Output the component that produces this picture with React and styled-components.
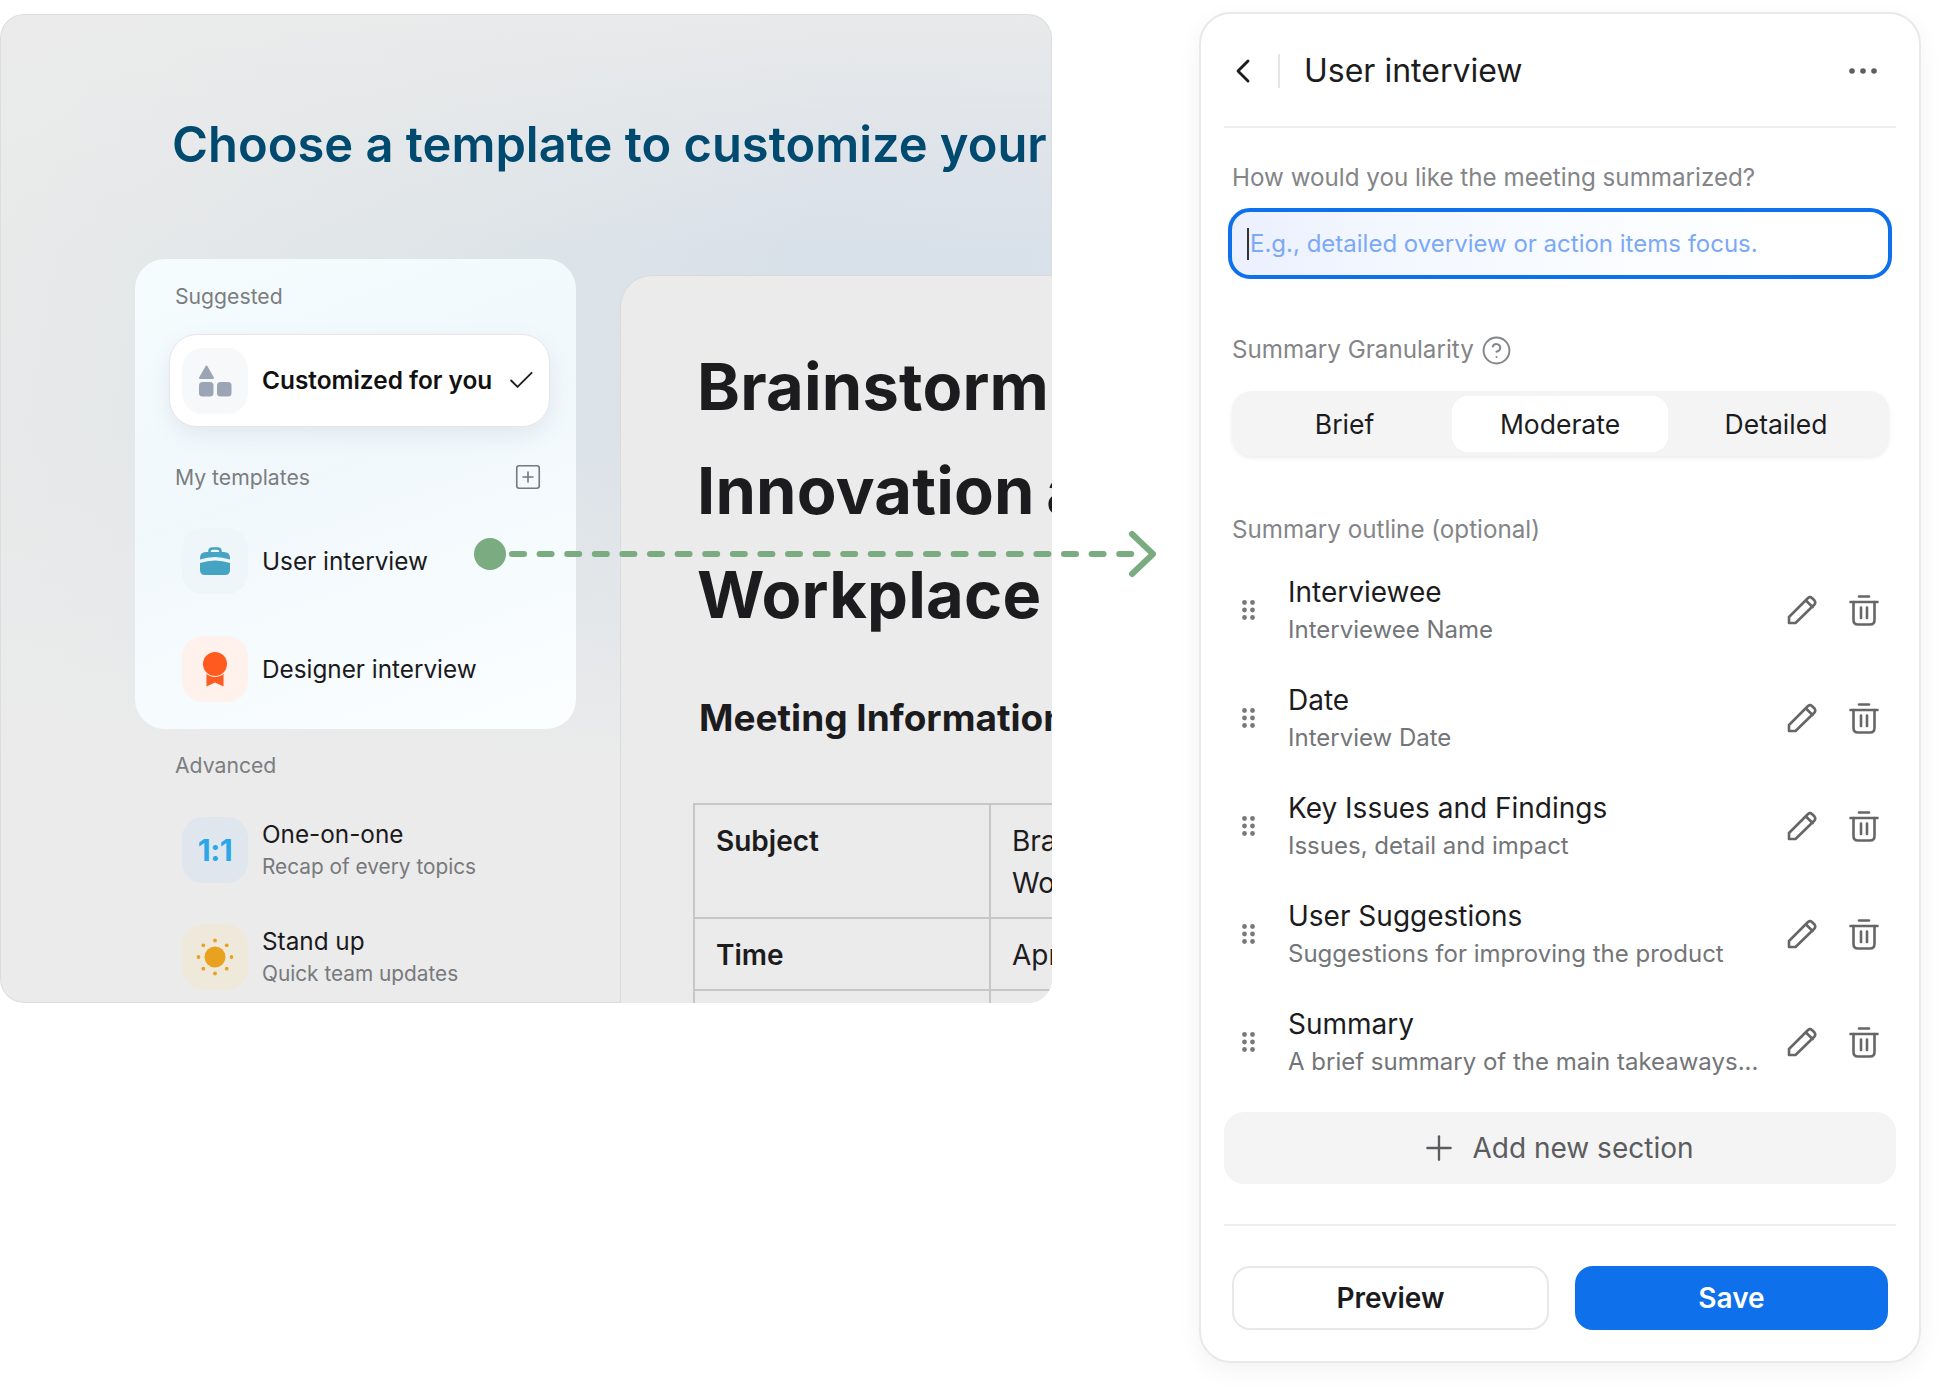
import styled, { createGlobalStyle } from "styled-components";
import { Check, ChevronLeft, CircleHelp, Plus, SquarePlus } from "lucide-react";

const GlobalStyle = createGlobalStyle`
  * { box-sizing: border-box; }
  html, body { margin: 0; background: #fff; }
  body { font-family: Inter, "Liberation Sans", sans-serif; color: #1c1c1e; }
`;

const Page = styled.div`
  position: relative;
  display: flex;
  align-items: flex-start;
  width: 1942px;
  height: 1392px;
  overflow: hidden;
`;

const Preview = styled.section`
  flex: none;
  width: 1052px;
  height: 989px;
  margin-top: 14px;
  border-radius: 24px;
  overflow: hidden;
  box-shadow: inset 0 0 0 1px #dcdddd;
  background:
    linear-gradient(180deg, rgba(235, 235, 235, 0.85) 0%, rgba(235, 235, 235, 0) 24%, rgba(235, 235, 235, 0) 42%, #ebebeb 76%),
    linear-gradient(100deg, #e9eaea 0%, #dfe5e8 38%, #d8e0e9 70%, #d9e1ea 100%);
`;

const Heading = styled.h1`
  margin: 0;
  padding: 102px 0 0 172px;
  height: 245px;
  font-size: 48.85px;
  line-height: 58px;
  font-weight: 600;
  color: #004a70;
  white-space: nowrap;
`;

const PreviewBody = styled.div`
  display: flex;
  align-items: flex-start;
`;

const Sidebar = styled.div`
  flex: none;
  width: 441px;
  margin-left: 135px;
`;

const SuggestedCard = styled.div`
  padding: 25px 0 27px;
  border-radius: 30px;
  background: linear-gradient(160deg, #f4fcfe 0%, #f1f8fc 45%, #fbfeff 100%);
`;

const SectionLabel = styled.div`
  display: flex;
  align-items: center;
  justify-content: space-between;
  height: 26px;
  margin: ${({ $top }) => $top || 0}px 0 ${({ $bottom }) => $bottom || 0}px;
  padding: 0 33px 2px 40px;
  font-size: 21.2px;
  line-height: 24px;
  color: #7b7d80;
`;

const SelectedItem = styled.div`
  display: flex;
  align-items: center;
  gap: 14px;
  width: 381px;
  height: 93px;
  margin-left: 34px;
  padding: 0 12px;
  border: 1px solid #e6e6e8;
  border-radius: 28px;
  background: #fff;
  box-shadow: 0 8px 20px rgba(120, 140, 160, 0.14);
`;

const SelectedName = styled.div`
  flex: 1;
  padding-bottom: 2px;
  font-size: 24.4px;
  font-weight: 600;
  color: #111;
  white-space: nowrap;
`;

const TemplateRow = styled.div`
  display: flex;
  align-items: center;
  gap: 14px;
  height: 66px;
  margin: ${({ $top }) => $top || 0}px 0 0 47px;
`;

const IconBox = styled.div`
  flex: none;
  display: flex;
  align-items: center;
  justify-content: center;
  width: 66px;
  height: 66px;
  border-radius: 21px;
  background: ${({ $bg }) => $bg};
`;

const OneOnOne = styled.span`
  font-size: 30px;
  font-weight: 700;
  color: #2aa7e8;
  letter-spacing: -0.5px;
`;

const TemplateName = styled.div`
  font-size: 24.3px;
  line-height: 33px;
  color: #1a1a1c;
  white-space: nowrap;
`;

const TemplateHint = styled.div`
  font-size: 20.8px;
  line-height: 32px;
  color: #77797c;
  white-space: nowrap;
`;

const DocCard = styled.article`
  flex: none;
  width: 760px;
  height: 800px;
  margin: 16px 0 0 44px;
  padding: 59px 0 0 72px;
  border: 1px solid #dadada;
  border-radius: 32px;
  background: #ebebeb;
`;

const DocTitle = styled.h2`
  margin: 0 0 0 4px;
  font-size: 65px;
  line-height: 104px;
  font-weight: 700;
  letter-spacing: 0.2px;
  word-spacing: -4px;
  color: #1c1c1e;
  white-space: nowrap;
`;

const DocSubtitle = styled.h3`
  margin: 43px 0 0 6px;
  font-size: 37px;
  line-height: 56px;
  font-weight: 700;
  color: #1c1c1e;
  white-space: nowrap;
`;

const DocTable = styled.table`
  margin-top: 57px;
  width: 660px;
  table-layout: fixed;
  border-collapse: collapse;
  font-size: 28px;
  line-height: 42px;
  color: #1c1c1e;

  td {
    padding: 15px 20px 13px 21px;
    border: 2px solid #c6c6c6;
    vertical-align: top;
  }
  td:first-child { width: 296px; font-weight: 600; }
`;

const DocCell = styled.div`
  white-space: nowrap;
`;

const FlowArrow = styled.svg`
  position: absolute;
  left: 474px;
  top: 530px;
`;

const Panel = styled.section`
  flex: none;
  display: flex;
  flex-direction: column;
  width: 722px;
  height: 1351px;
  margin: 12px 0 0 147px;
  padding: 0 23px;
  border: 2px solid #e9e9e9;
  border-radius: 32px;
  background: #fff;
  box-shadow: 0 8px 24px rgba(0, 0, 0, 0.05);
`;

const PanelHeader = styled.header`
  flex: none;
  display: flex;
  align-items: center;
  height: 114px;
  padding: 2px 19px 0 9px;
  border-bottom: 2px solid #f0f0f0;
`;

const BackButton = styled.div`
  display: flex;
  width: 47px;
  height: 34px;
  align-items: center;
  border-right: 2px solid #e6e6e6;
  color: #1c1c1e;
`;

const BackIcon = styled(ChevronLeft)`
  flex: none;
  margin-left: -10px;
`;

const PanelTitle = styled.h2`
  flex: 1;
  margin: 0 0 0 24px;
  font-size: 32px;
  line-height: 40px;
  font-weight: 400;
  color: #1c1c1e;
`;

const FieldLabel = styled.div`
  display: flex;
  align-items: center;
  gap: 7px;
  height: 30px;
  margin: ${({ $top }) => $top}px 0 ${({ $bottom }) => $bottom}px;
  padding-left: 8px;
  font-size: 24.2px;
  line-height: 30px;
  color: #838588;
`;

const PromptInput = styled.div`
  position: relative;
  display: flex;
  align-items: center;
  height: 71px;
  margin: 0 4px;
  padding-left: 18px;
  border: 4px solid #0e70eb;
  border-radius: 22px;
  font-size: 24px;
  color: #7ba9f7;
  background: linear-gradient(90deg, #eceffe 0%, #f3f8ff 25%, #fff 85%);

  &::before {
    content: "";
    position: absolute;
    left: 15px;
    top: 16px;
    width: 2px;
    height: 32px;
    background: #333;
  }
`;

const Segments = styled.div`
  display: grid;
  grid-template-columns: 215px 216px 1fr;
  height: 65px;
  margin: 0 7px 0 8px;
  padding: 5px 5px 4px;
  border-radius: 20px;
  background: #f4f4f4;
  box-shadow: 0 2px 4px rgba(0, 0, 0, 0.08);
`;

const Segment = styled.div`
  display: flex;
  align-items: center;
  justify-content: center;
  border-radius: 16px;
  font-size: 26.5px;
  color: #1c1c1e;
  background: ${({ $active }) => ($active ? "#fff" : "transparent")};
`;

const OutlineRow = styled.div`
  flex: none;
  display: flex;
  align-items: center;
  height: 108px;
  padding: 0 17px 0 18px;
`;

const RowText = styled.div`
  flex: 1;
  margin-left: 33px;
  padding-top: 2px;
  min-width: 0;
`;

const RowTitle = styled.div`
  font-size: 28px;
  line-height: 36px;
  color: #1c1c1e;
`;

const RowHint = styled.div`
  margin-top: 1px;
  font-size: 24px;
  line-height: 37px;
  color: #737578;
  white-space: nowrap;
`;

const RowActions = styled.div`
  display: flex;
  align-items: center;
  gap: 32px;
`;

const AddButton = styled.div`
  flex: none;
  display: flex;
  align-items: center;
  justify-content: center;
  gap: 20px;
  height: 72px;
  margin-top: 16px;
  border-radius: 20px;
  font-size: 28px;
  color: #5a5c5f;
  background: #f4f4f4;
`;

const AddIcon = styled(Plus)`
  flex: none;
  margin: 0 -7px;
`;

const FooterRule = styled.div`
  flex: none;
  height: 2px;
  margin-top: 40px;
  background: #f0f0f0;
`;

const FooterActions = styled.div`
  flex: none;
  display: flex;
  gap: 26px;
  margin-top: 40px;
  padding: 0 8px;
`;

const ActionButton = styled.div`
  flex: 1;
  display: flex;
  align-items: center;
  justify-content: center;
  height: 64px;
  border: ${({ $primary }) => ($primary ? "none" : "2px solid #e8e8e8")};
  border-radius: 18px;
  font-size: 28px;
  font-weight: 600;
  color: ${({ $primary }) => ($primary ? "#fff" : "#1c1c1e")};
  background: ${({ $primary }) => ($primary ? "#0e70eb" : "#fff")};
`;

const ShapesIcon = () => (
  <svg width="34" height="32" viewBox="0 0 34 32">
    <path d="M8.5 1.5 L15 13 H2 Z" fill="#9ca5b5" stroke="#9ca5b5" strokeWidth="2" strokeLinejoin="round" />
    <rect x="1" y="17" width="14.5" height="14.5" rx="3.5" fill="#9ca5b5" />
    <rect x="19" y="17" width="14.5" height="14.5" rx="3.5" fill="#9ca5b5" />
  </svg>
);

const BriefcaseIcon = () => (
  <svg width="32" height="28" viewBox="0 0 32 28">
    <path d="M10.5 6 V4.5 Q10.5 1.5 13.5 1.5 H18.5 Q21.5 1.5 21.5 4.5 V6" fill="none" stroke="#45a3c4" strokeWidth="2.6" />
    <path d="M1 11 Q1 5 7 5 H25 Q31 5 31 11 V12.5 Q16 7.5 1 12.5 Z" fill="#45a3c4" />
    <path d="M1 16 Q16 11 31 16 V23 Q31 28 26 28 H6 Q1 28 1 23 Z" fill="#45a3c4" />
  </svg>
);

const MedalIcon = () => (
  <svg width="26" height="36" viewBox="0 0 26 36">
    <path d="M4.5 22 H21.5 V35.5 L13 31.5 L4.5 35.5 Z" fill="#ff5a1f" />
    <circle cx="13" cy="13" r="13" fill="#fff2ec" />
    <circle cx="13" cy="13" r="12" fill="#ff5a1f" />
  </svg>
);

const sunDots = [0, 45, 90, 135, 180, 225, 270, 315];

const SunIcon = () => (
  <svg width="38" height="38" viewBox="-19 -19 38 38">
    <circle r="10.5" fill="#e9a220" />
    {sunDots.map((deg) => (
      <circle
        key={deg}
        r="1.9"
        cx={Math.round(16.5 * Math.cos((deg * Math.PI) / 180) * 10) / 10}
        cy={Math.round(16.5 * Math.sin((deg * Math.PI) / 180) * 10) / 10}
        fill="#e9a220"
      />
    ))}
  </svg>
);

const GripIcon = () => (
  <svg width="13" height="20" viewBox="0 0 13 20" fill="#77797c">
    <circle cx="2.5" cy="2.5" r="2.4" />
    <circle cx="10.5" cy="2.5" r="2.4" />
    <circle cx="2.5" cy="10" r="2.4" />
    <circle cx="10.5" cy="10" r="2.4" />
    <circle cx="2.5" cy="17.5" r="2.4" />
    <circle cx="10.5" cy="17.5" r="2.4" />
  </svg>
);

const PencilIcon = () => (
  <svg width="30" height="30" viewBox="0 0 30 30" fill="none" stroke="#666" strokeWidth="2.6" strokeLinejoin="round" strokeLinecap="round">
    <path d="M2 28 V22 L21 3 Q23 1.4 25 3 L27.5 5.5 Q29 7.5 27.5 9.5 L8.5 28 Z" />
    <path d="M19 5.5 L25.5 12" />
  </svg>
);

const TrashIcon = () => (
  <svg width="30" height="31" viewBox="0 0 30 31" fill="none" stroke="#666" strokeWidth="2.6" strokeLinecap="round">
    <path d="M10 1.5 H20" />
    <path d="M1.5 7 H28.5" />
    <path d="M4.5 7 V25 Q4.5 29.5 9 29.5 H21 Q25.5 29.5 25.5 25 V7" />
    <path d="M12 12.5 V23" />
    <path d="M18 12.5 V23" />
  </svg>
);

const MoreIcon = () => (
  <svg width="28" height="6" viewBox="0 0 28 6" fill="#5c5e61">
    <circle cx="3" cy="3" r="2.8" />
    <circle cx="14" cy="3" r="2.8" />
    <circle cx="25" cy="3" r="2.8" />
  </svg>
);

const outline = [
  { title: "Interviewee", hint: "Interviewee Name" },
  { title: "Date", hint: "Interview Date" },
  { title: "Key Issues and Findings", hint: "Issues, detail and impact" },
  { title: "User Suggestions", hint: "Suggestions for improving the product" },
  { title: "Summary", hint: "A brief summary of the main takeaways..." },
];

export default function App() {
  return (
    <>
      <GlobalStyle />
      <Page>
        <Preview>
          <Heading>Choose a template to customize your meeting notes</Heading>
          <PreviewBody>
            <Sidebar>
              <SuggestedCard>
                <SectionLabel $bottom={24}>Suggested</SectionLabel>
                <SelectedItem>
                  <IconBox $bg="#f7f8fa"><ShapesIcon /></IconBox>
                  <SelectedName>Customized for you</SelectedName>
                  <Check size={33} strokeWidth={1.5} color="#222" />
                </SelectedItem>
                <SectionLabel $top={38} $bottom={37}>
                  My templates
                  <SquarePlus size={30} strokeWidth={1.3} color="#77797c" />
                </SectionLabel>
                <TemplateRow>
                  <IconBox $bg="#eff6f9"><BriefcaseIcon /></IconBox>
                  <TemplateName>User interview</TemplateName>
                </TemplateRow>
                <TemplateRow $top={42}>
                  <IconBox $bg="#fff1ec"><MedalIcon /></IconBox>
                  <TemplateName>Designer interview</TemplateName>
                </TemplateRow>
              </SuggestedCard>
              <SectionLabel $top={24} $bottom={38}>Advanced</SectionLabel>
              <TemplateRow>
                <IconBox $bg="#dfe6ee"><OneOnOne>1:1</OneOnOne></IconBox>
                <div>
                  <TemplateName>One-on-one</TemplateName>
                  <TemplateHint>Recap of every topics</TemplateHint>
                </div>
              </TemplateRow>
              <TemplateRow $top={41}>
                <IconBox $bg="#efe9dc"><SunIcon /></IconBox>
                <div>
                  <TemplateName>Stand up</TemplateName>
                  <TemplateHint>Quick team updates</TemplateHint>
                </div>
              </TemplateRow>
            </Sidebar>
            <DocCard>
              <DocTitle>
                Brainstorming Session on<br />
                Innovation and Collaboration<br />
                Workplace
              </DocTitle>
              <DocSubtitle>Meeting Information</DocSubtitle>
              <DocTable>
                <tbody>
                  <tr>
                    <td>Subject</td>
                    <td>
                      <DocCell>Brainstorming Session on</DocCell>
                      <DocCell>Workplace</DocCell>
                    </td>
                  </tr>
                  <tr>
                    <td>Time</td>
                    <td><DocCell>April 12, 2024</DocCell></td>
                  </tr>
                  <tr>
                    <td>&nbsp;</td>
                    <td>&nbsp;</td>
                  </tr>
                </tbody>
              </DocTable>
            </DocCard>
          </PreviewBody>
        </Preview>

        <Panel>
          <PanelHeader>
            <BackButton><BackIcon size={40} strokeWidth={1.7} /></BackButton>
            <PanelTitle>User interview</PanelTitle>
            <MoreIcon />
          </PanelHeader>

          <FieldLabel $top={35} $bottom={15}>How would you like the meeting summarized?</FieldLabel>
          <PromptInput>E.g., detailed overview or action items focus.</PromptInput>

          <FieldLabel $top={56} $bottom={26}>
            Summary Granularity
            <CircleHelp size={31} strokeWidth={1.5} color="#838588" />
          </FieldLabel>
          <Segments>
            <Segment>Brief</Segment>
            <Segment $active>Moderate</Segment>
            <Segment>Detailed</Segment>
          </Segments>

          <FieldLabel $top={59} $bottom={11}>Summary outline (optional)</FieldLabel>
          {outline.map((row) => (
            <OutlineRow key={row.title}>
              <GripIcon />
              <RowText>
                <RowTitle>{row.title}</RowTitle>
                <RowHint>{row.hint}</RowHint>
              </RowText>
              <RowActions>
                <PencilIcon />
                <TrashIcon />
              </RowActions>
            </OutlineRow>
          ))}

          <AddButton>
            <AddIcon size={40} strokeWidth={1.4} />
            Add new section
          </AddButton>
          <FooterRule />
          <FooterActions>
            <ActionButton>Preview</ActionButton>
            <ActionButton $primary>Save</ActionButton>
          </FooterActions>
        </Panel>

        <FlowArrow width="686" height="48" viewBox="0 0 686 48" fill="none" stroke="#7bab80" strokeWidth="6" strokeLinecap="round" strokeLinejoin="round">
          <circle cx="16" cy="24" r="16" fill="#7bab80" stroke="none" />
          <path d="M38 24 H658" strokeDasharray="12 15.6" />
          <path d="M658 4 L679 24 L658 44" />
        </FlowArrow>
      </Page>
    </>
  );
}
